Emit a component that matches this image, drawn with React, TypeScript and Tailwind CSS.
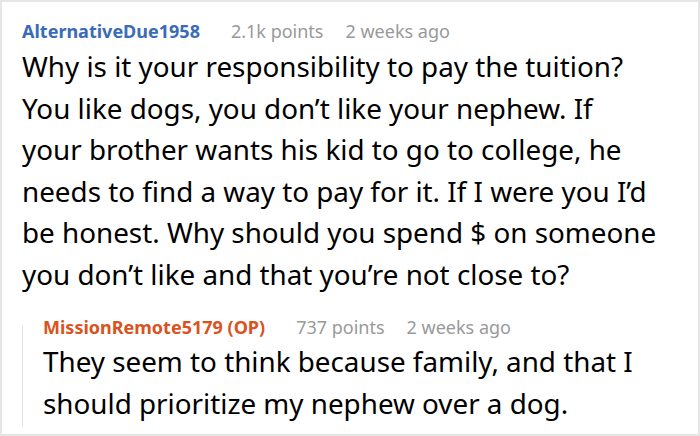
const topLines = [
  'Why is it your responsibility to pay the tuition?',
  'You like dogs, you don’t like your nephew. If',
  'your brother wants his kid to go to college, he',
  'needs to find a way to pay for it. If I were you I’d',
  'be honest. Why should you spend $ on someone',
  'you don’t like and that you’re not close to?',
]

const replyLines = [
  'They seem to think because family, and that I',
  'should prioritize my nephew over a dog.',
]

function Meta({ name, color, points }: { name: string; color: string; points: string }) {
  return (
    <div className="flex items-baseline text-[18px] leading-[24px] whitespace-nowrap">
      <span className={`font-bold ${color}`}>{name}</span>
      <span className="ml-[31px] text-[#999999]">{points}</span>
      <span className="ml-[22px] text-[#999999]">2 weeks ago</span>
    </div>
  )
}

export default function App() {
  return (
    <div
      className="w-[700px] h-[436px] bg-white border-2 border-[#e6e6e6] overflow-hidden text-black"
      style={{ fontFamily: '"Noto Sans", "Open Sans", sans-serif' }}
    >
      <div className="pl-[20px] pt-[17px]">
        {/* Top comment */}
        <Meta name="AlternativeDue1958" color="text-[#3a6bb8]" points="2.1k points" />
        <div className="mt-[3px] text-[27.8px] leading-[41.5px] whitespace-nowrap">
          {topLines.map((l, i) => (
            <p key={i}>{l}</p>
          ))}
        </div>

        {/* Reply */}
        <div className="flex mt-[20px]">
          <div className="w-px h-[101px] shrink-0 bg-[#e3e3e3] mt-[11px]" />
          <div className="pl-[20px]">
            <Meta name="MissionRemote5179 (OP)" color="text-[#d9531e]" points="737 points" />
            <div className="mt-[2px] text-[27.8px] leading-[41.5px] whitespace-nowrap">
              {replyLines.map((l, i) => (
                <p key={i}>{l}</p>
              ))}
            </div>
          </div>
        </div>
      </div>
    </div>
  )
}
